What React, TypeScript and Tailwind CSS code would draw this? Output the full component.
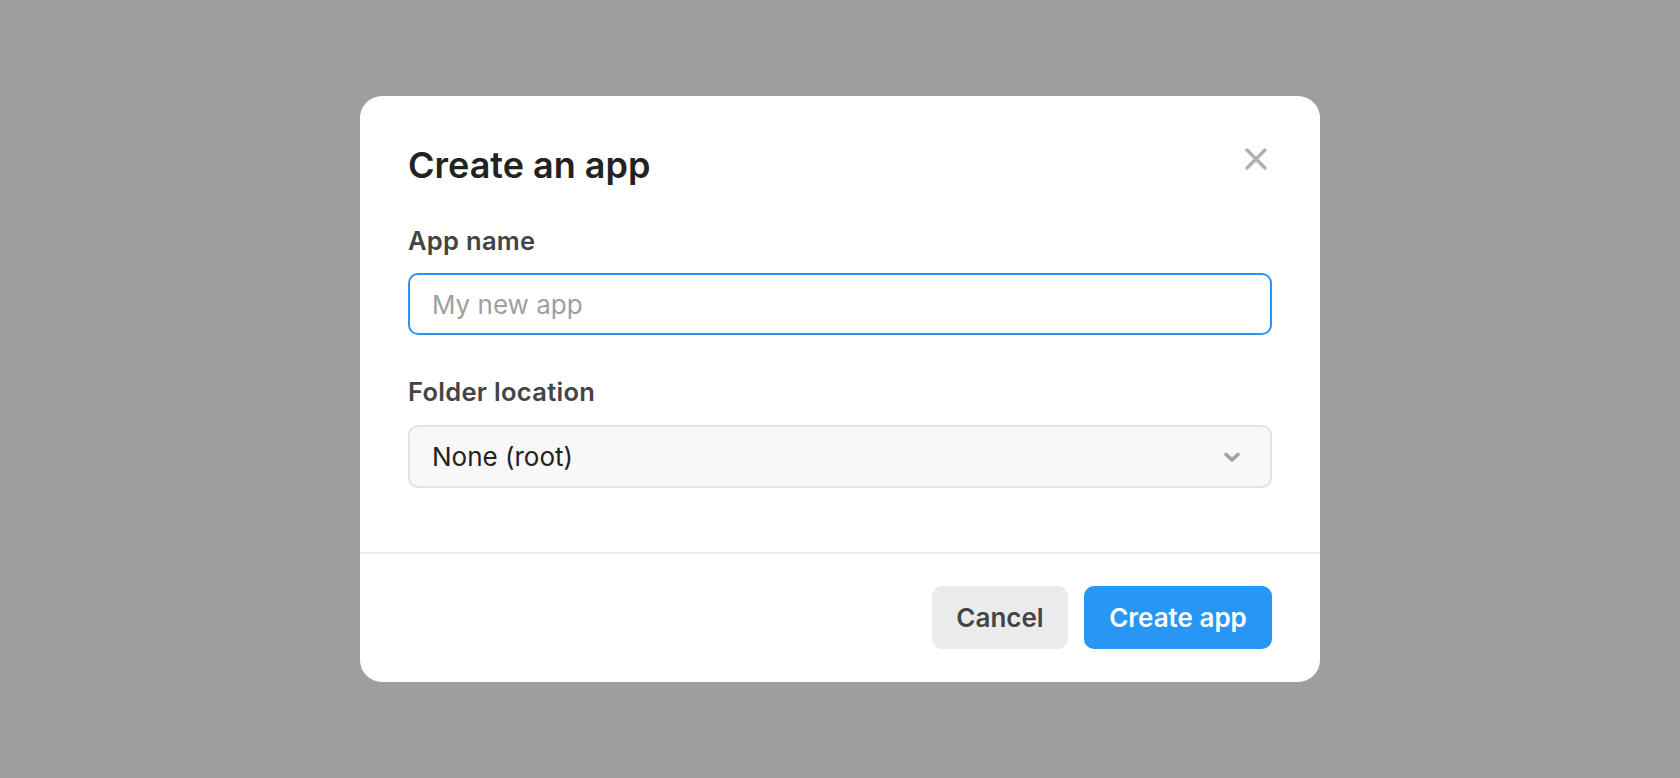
import { useState } from "react";

const font = { fontFamily: "Inter, 'Noto Sans', sans-serif" };

function CloseIcon() {
	return (
		<svg width="22" height="22" viewBox="0 0 22 22" fill="none">
			<path
				d="M2 2L20 20M20 2L2 20"
				stroke="#afafaf"
				strokeWidth="3.4"
				strokeLinecap="round"
			/>
		</svg>
	);
}

function ChevronDown() {
	return (
		<svg width="16" height="10" viewBox="0 0 16 10" fill="none">
			<path
				d="M2 2.5L8 7.8L14 2.5"
				stroke="#a3a3a3"
				strokeWidth="3.6"
				strokeLinecap="round"
				strokeLinejoin="round"
			/>
		</svg>
	);
}

export default function App() {
	const [name, setName] = useState("");
	const [folder, setFolder] = useState("root");

	return (
		<div
			className="flex h-[778px] w-full items-center justify-center bg-[#9e9e9e]"
			style={font}
		>
			<div className="w-[960px] rounded-[22px] bg-white">
				<div className="px-12 pt-[49px] pb-[64px]">
					<div className="flex justify-between">
						<h1 className="text-[36px] leading-[40px] font-semibold text-[#222]">
							Create an app
						</h1>
						<button
							className="-mt-[2px] flex h-8 w-8 items-center justify-center self-start"
							aria-label="Close"
						>
							<CloseIcon />
						</button>
					</div>

					<label className="mt-10 mb-4 block text-[25.5px] leading-[32px] font-semibold tracking-[0.3px] text-[#444]">
						App name
					</label>
					<input
						value={name}
						onChange={(e) => setName(e.target.value)}
						placeholder="My new app"
						className="block h-[62px] w-full rounded-[10px] border-2 border-[#2b95f5] bg-white px-[22px] text-[26px] text-[#222] outline-none placeholder:text-[#a0a0a0]"
					/>

					<label className="mt-[41px] mb-[17px] block text-[25.5px] leading-[32px] font-semibold tracking-[0.3px] text-[#444]">
						Folder location
					</label>
					<div className="relative">
						<select
							value={folder}
							onChange={(e) => setFolder(e.target.value)}
							className="block h-[63px] w-full appearance-none rounded-[10px] border-2 border-[#e3e3e3] bg-[#f8f8f8] px-[22px] text-[26px] text-[#222] outline-none"
							style={font}
						>
							<option value="root">None (root)</option>
						</select>
						<div className="pointer-events-none absolute top-1/2 right-8 -translate-y-1/2">
							<ChevronDown />
						</div>
					</div>
				</div>

				<div className="h-[2px] bg-[#ececec]" />

				<div className="flex justify-end gap-4 px-12 pt-8 pb-[33px]">
					<button className="h-[63px] w-[136px] rounded-[10px] bg-[#ebebeb] text-[26px] font-semibold text-[#444]">
						Cancel
					</button>
					<button className="h-[63px] w-[188px] rounded-[10px] bg-[#2896f5] text-[26px] font-semibold text-white">
						Create app
					</button>
				</div>
			</div>
		</div>
	);
}
